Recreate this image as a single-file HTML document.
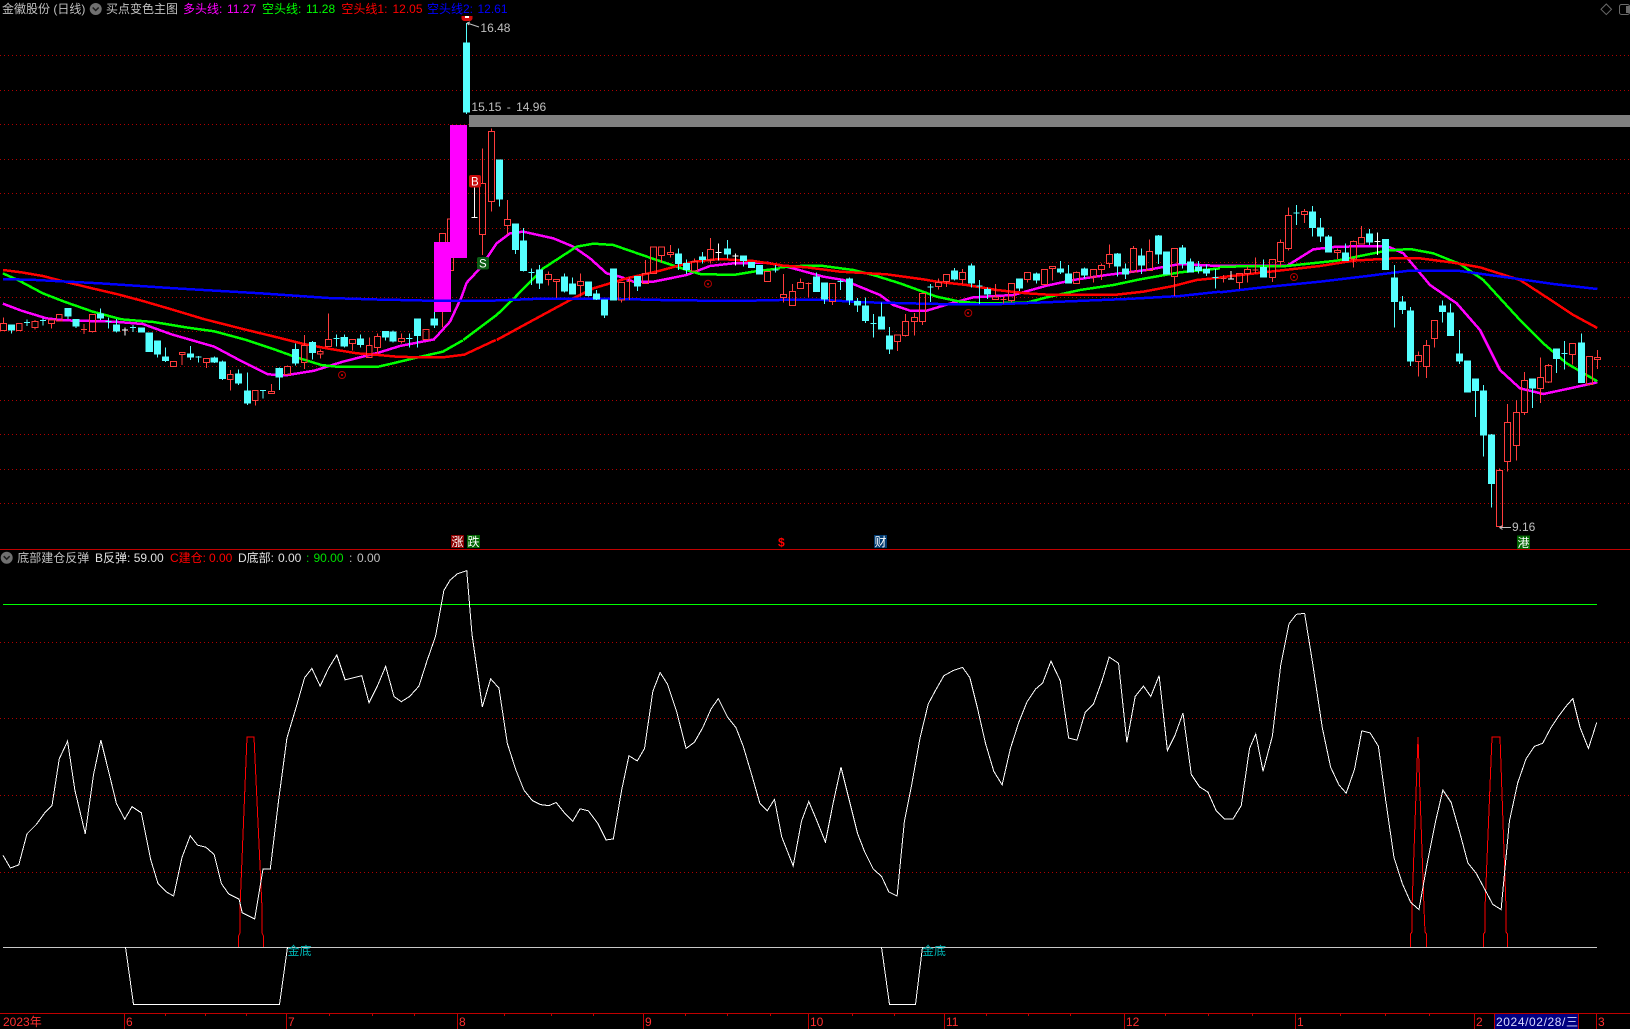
<!DOCTYPE html>
<html lang="zh"><head><meta charset="utf-8"><title>金徽股份</title>
<style>
html,body{margin:0;padding:0;background:#000;width:1630px;height:1029px;overflow:hidden}
svg{display:block;position:absolute;left:0;top:0}
text{font-family:"Liberation Sans","Noto Sans CJK SC",sans-serif;font-size:12px;fill:#c0c0c0}
path,polyline,line,rect.n{vector-effect:non-scaling-stroke}
.c path,.m polyline,.ax,.gr,.il,.il polyline,.il path{shape-rendering:crispEdges}
.cy{fill:#55ffff;stroke:#55ffff;stroke-width:1}
.rd{fill:none;stroke:#ff3c3c;stroke-width:1}
.wh{fill:#fff;stroke:#fff;stroke-width:1}
.m polyline{fill:none;stroke-width:2.5}
</style></head><body>
<svg width="1630" height="1029" viewBox="0 0 1630 1029" xmlns="http://www.w3.org/2000/svg">
<rect width="1630" height="1029" fill="#000"/>
<!-- grid -->
<g class="gr" stroke="#b00000" stroke-width="1" stroke-dasharray="1 3">
<line x1="0" x2="1630" y1="55.5" y2="55.5"/><line x1="0" x2="1630" y1="90.5" y2="90.5"/><line x1="0" x2="1630" y1="124.5" y2="124.5"/><line x1="0" x2="1630" y1="159.5" y2="159.5"/><line x1="0" x2="1630" y1="193.5" y2="193.5"/><line x1="0" x2="1630" y1="228.5" y2="228.5"/><line x1="0" x2="1630" y1="262.5" y2="262.5"/><line x1="0" x2="1630" y1="297.5" y2="297.5"/><line x1="0" x2="1630" y1="331.5" y2="331.5"/><line x1="0" x2="1630" y1="366.5" y2="366.5"/><line x1="0" x2="1630" y1="400.5" y2="400.5"/><line x1="0" x2="1630" y1="434.5" y2="434.5"/><line x1="0" x2="1630" y1="469.5" y2="469.5"/><line x1="0" x2="1630" y1="503.5" y2="503.5"/>
<line x1="0" x2="1630" y1="642.5" y2="642.5"/><line x1="0" x2="1630" y1="718.5" y2="718.5"/><line x1="0" x2="1630" y1="795.5" y2="795.5"/><line x1="0" x2="1630" y1="872.5" y2="872.5"/>
</g>
<!-- gray band -->
<rect x="469" y="115" width="1161" height="12" fill="#808080"/>
<!-- hidden red candles under magenta -->
<g class="c" transform="translate(400 100) scale(.33333)">
<path class="rd" d="M127 400h9V600h-18V400zM127 600V682M151 357h9V512h-18V357z"/>
</g>
<!-- magenta sticks -->
<rect x="434" y="242" width="17" height="70" fill="#ff00ff"/>
<rect x="450" y="125" width="17" height="133" fill="#ff00ff"/>
<!-- moving averages -->
<g class="m" transform="translate(0 240) scale(.35714 .33333)">
<polyline stroke="#ff00ff" points="8,191 60,212 130,235 180,241 320,245 400,252 480,283 600,320 670,360 750,403 800,406 880,392 960,365 1060,338 1120,318 1216,298"/>
<polyline stroke="#00ff00" points="8,100 50,120 120,160 180,185 260,215 340,238 430,246 520,262 600,274 690,300 760,325 830,352 900,375 950,381 1055,381 1100,370 1170,352 1240,335 1296,301"/>
<polyline stroke="#ff0000" points="8,90 60,97 120,108 170,122 250,143 330,163 400,183 480,208 570,237 680,267 780,293 850,312 920,326 1000,340 1060,345 1110,350 1170,352 1240,352 1300,344 1388,300"/>
<polyline stroke="#0000ff" points="8,117 100,120 280,130 490,145 730,160 920,174 1100,180 1120,180"/>
</g>
<g class="m" transform="translate(400 100) scale(.33333)">
<polyline stroke="#ff00ff" points="100,720 150,665 185,590 200,548 240,505 290,430 330,400 370,395 460,415 520,440 570,475 620,520 660,530 700,545 760,545 860,525 930,498 1000,490 1100,488 1140,496"/>
<polyline stroke="#00ff00" points="190,720 290,645 340,597 430,505 530,440 580,431 640,435 770,480 860,510 900,522 1000,525 1060,515 1140,505"/>
<polyline stroke="#ff0000" points="290,720 400,660 520,595 580,565 680,535 780,512 880,485 960,477 1060,483 1140,495"/>
<polyline stroke="#0000ff" points="0,600 130,603 250,603 400,597 660,597 780,600 1000,603 1140,600"/>
</g>
<g class="m" transform="translate(780 190) scale(.33333)">
<polyline stroke="#ff00ff" points="0,225 50,238 130,260 190,270 300,315 340,345 390,362 440,362 520,338 580,322 700,315 800,287 880,270 980,255 1100,240 1200,222 1320,228"/>
<polyline stroke="#00ff00" points="0,232 60,228 130,228 220,240 280,255 360,280 470,320 540,335 600,340 740,338 800,322 900,300 1000,285 1080,268 1200,247 1320,235"/>
<polyline stroke="#ff0000" points="0,226 80,232 180,245 320,253 430,268 470,275 560,285 650,300 740,310 820,315 1000,315 1090,305 1180,288 1250,270 1320,263"/>
<polyline stroke="#0000ff" points="0,330 130,330 260,337 470,342 640,343 770,338 1040,327 1200,318 1320,305"/>
</g>
<g class="m" transform="translate(1220 190) scale(.33333)">
<polyline stroke="#ff00ff" points="0,228 200,228 280,178 350,170 500,168 550,190 630,285 710,340 780,420 840,540 900,595 970,612 1050,595 1132,577"/>
<polyline stroke="#00ff00" points="0,230 200,228 350,212 500,182 570,177 640,190 720,222 790,270 900,390 970,460 1040,520 1132,574"/>
<polyline stroke="#ff0000" points="0,262 150,245 300,228 400,212 520,205 600,205 700,218 780,232 900,270 1000,335 1060,375 1132,414"/>
<polyline stroke="#0000ff" points="0,307 120,293 300,275 450,257 560,243 720,243 860,262 1000,282 1132,297"/>
</g>
<!-- candles section 1 -->
<g class="c" transform="translate(0 240) scale(.35714 .33333)">
<path class="cy" d="M32 255h8.5V270h-17V255zM32 255V281M76 248h8.5h-17M76 238V258M121 242h8.5h-17M121 236V256M191 205h8.5V228h-17V205zM191 228V237M213 238h8.5V258h-17V238zM213 238V264M281 222h8.5V234h-17V222zM281 205V240M304 244h8.5h-17M304 232V266M326 255h8.5V273h-17V255zM326 237V278M373 263h8.5h-17M373 255V276M396 264h8.5V276h-17V264zM418 279h8.5V335h-17V279zM441 303h8.5V342h-17V303zM441 303V352M463 351h8.5V362h-17V351zM463 322V366M533 342h8.5V351h-17V342zM533 318V360M556 351h8.5h-17M556 348V368M600 354h8.5V366h-17V354zM600 349V369M623 366h8.5V416h-17V366zM623 361V420M668 402h8.5V429h-17V402zM668 388V435M693 453h8.5V489h-17V453zM693 397V495M737 452h8.5h-17M737 452V476M782 385h8.5V411h-17V385zM782 382V450M827 328h8.5V369h-17V328zM827 310V376M875 307h8.5V338h-17V307zM875 303V358M942 296h8.5h-17M942 283V320M964 292h8.5V318h-17V292zM964 283V322M1009 297h8.5V313h-17V297zM1009 283V322M1079 274h8.5V291h-17V274zM1079 274V302M1101 276h8.5V303h-17V276zM1101 272V308M1146 296h8.5h-17M1146 281V322M1169 237h8.5V287h-17V237zM1169 237V322M1216 237h8.5V255h-17V237zM1216 216V264"/>
<path class="rd" d="M10 250h8V272h-16V250zM10 232V250M54 250h8V272h-16V250zM98 244h8V263h-16V244zM98 240V244M98 263V268M144 240h8V250h-16V240zM144 250V266M166 223h8V243h-16V223zM235 268h8h-16M235 252V282M259 223h8V275h-16V223zM259 275V277M486 364h8V380h-16V364zM510 337h8V343h-16V337zM510 343V375M578 356h8V368h-16V356zM578 368V384M645 403h8V419h-16V403zM645 390V403M645 419V452M715 451h8V482h-16V451zM715 482V497M760 455h8V460h-16V455zM760 432V455M805 379h8V404h-16V379zM805 376V379M852 316h8V368h-16V316zM852 285V316M852 368V387M897 334h8V342h-16V334zM897 328V334M897 342V356M920 298h8V320h-16V298zM920 220V298M987 298h8V310h-16V298zM987 310V332M1034 316h8V352h-16V316zM1034 292V316M1057 290h8V322h-16V290zM1057 280V290M1057 322V340M1124 295h8V304h-16V295zM1124 280V295M1124 304V310M1193 268h8V299h-16V268z"/>
<path class="wh" d="M350 270h8.5h-17M350 262V287"/>
</g>
<!-- candles section 2 -->
<g class="c" transform="translate(400 100) scale(.33333)">
<path class="cy" d="M199 -171h9V36h-18V-171zM199 -231V42M298 180h9V297h-18V180zM298 180V320M346 372h9V449h-18V372zM346 372V462M370 423h9V511h-18V423zM370 384V515M394 518h9h-18M394 505V555M418 510h9V549h-18V510zM418 495V567M493 531h9V573h-18V531zM493 520V578M517 552h9V582h-18V552zM517 532V552M565 546h9V587h-18V546zM565 546V590M589 582h9V597h-18V582zM589 570V600M613 600h9V645h-18V600zM613 600V654M640 507h9V600h-18V507zM712 529h9V558h-18V529zM712 529V573M835 462h9V490h-18V462zM835 445V510M859 490h9V508h-18V490zM859 478V522M907 471h9V478h-18V471zM907 456V490M982 447h9V462h-18V447zM982 420V475M1030 468h9V482h-18V468zM1030 468V500M1054 487h9V503h-18V487zM1078 497h9V522h-18V497zM1126 510h9h-18M1126 495V518"/>
<path class="rd" d="M247 250h9V404h-18V250zM247 145V250M247 404V465M274 94h9V305h-18V94zM274 85V94M274 305V335M322 358h9V377h-18V358zM322 300V358M322 377V404M445 523h9V539h-18V523zM445 514V523M445 539V556M469 538h9V544h-18V538zM469 544V594M541 544h9V557h-18V544zM541 520V544M541 557V590M664 547h9V600h-18V547zM664 600V608M688 545h9h-18M688 530V600M736 520h9V550h-18V520zM736 480V520M760 441h9V520h-18V441zM784 441h9V467h-18V441zM784 467V487M811 457h9V464h-18V457zM811 435V457M811 464V473M883 485h9V513h-18V485zM883 475V485M931 448h9V480h-18V448zM931 414V448M931 480V490M1102 515h9V545h-18V515z"/>
<path class="wh" d="M223 263V352M214 352h18M955 458h9h-18M955 430V482M1006 468h9h-18M1006 460V497"/>
</g>
<!-- candles section 3 -->
<g class="c" transform="translate(780 190) scale(.33333)">
<path class="cy" d="M109 261h9V305h-18V261zM109 247V261M133 279h9V327h-18V279zM133 279V342M181 275h9h-18M181 268V300M208 267h9V330h-18V267zM208 262V345M232 335h9V345h-18V335zM232 324V366M256 348h9V392h-18V348zM256 322V399M280 400h9h-18M280 372V443M304 381h9V417h-18V381zM304 338V381M328 438h9V477h-18V438zM328 411V492M451 291h9h-18M451 282V336M523 243h9V267h-18V243zM523 234V272M574 228h9V279h-18V228zM574 220V293M598 288h9h-18M598 270V342M622 298h9V312h-18V298zM622 292V327M718 267h9V294h-18V267zM718 267V303M769 252h9V270h-18V252zM769 247V280M841 237h9V246h-18V237zM841 213V252M865 252h9V279h-18V252zM865 225V252M913 237h9V255h-18V237zM913 232V265M1012 192h9V228h-18V192zM1012 189V260M1036 237h9V252h-18V237zM1036 220V267M1084 198h9V225h-18V198zM1084 175V252M1135 138h9V192h-18V138zM1135 135V222M1159 186h9V252h-18V186zM1207 174h9V220h-18V174zM1207 165V235M1231 216h9V246h-18V216zM1231 205V216M1255 231h9V242h-18V231zM1255 213V250M1279 238h9V249h-18V238zM1279 224V258M1306 262h9h-18M1306 237V295"/>
<path class="rd" d="M10 313h9V322h-18V313zM10 252V313M10 322V338M37 304h9V347h-18V304zM37 282V304M61 277h9V295h-18V277zM61 265V277M85 281h9h-18M85 277V322M157 280h9V335h-18V280zM157 335V345M352 435h9V455h-18V435zM352 455V483M376 394h9V437h-18V394zM376 372V394M376 437V440M403 382h9V395h-18V382zM403 369V382M403 395V437M427 310h9V395h-18V310zM427 395V405M475 277h9V290h-18V277zM475 265V277M475 290V299M499 253h9V275h-18V253zM499 275V291M547 247h9V269h-18V247zM547 237V247M547 269V282M646 321h9V329h-18V321zM646 282V321M670 329h9h-18M670 320V340M694 280h9V332h-18V280zM694 332V338M742 247h9V269h-18V247zM742 269V278M793 238h9V284h-18V238zM817 229h9V236h-18V229zM817 236V272M889 247h9V281h-18V247zM889 244V247M940 238h9V261h-18V238zM940 261V278M964 226h9V239h-18V226zM964 220V226M964 239V270M988 193h9V221h-18V193zM988 163V193M988 221V234M1060 175h9V246h-18V175zM1060 168V175M1108 184h9V242h-18V184zM1108 148V184M1183 175h9V260h-18V175zM1183 260V318"/>
</g>
<!-- candles section 4 -->
<g class="c" transform="translate(1220 190) scale(.33333)">
<path class="cy" d="M130 232h9V261h-18V232zM130 208V232M229 69h9h-18M229 45V105M277 66h9V113h-18V66zM277 48V140M301 114h9V138h-18V114zM301 84V156M325 141h9V186h-18V141zM325 135V141M376 189h9V212h-18V189zM376 160V189M448 132h9V156h-18V132zM448 117V165M496 148h9V239h-18V148zM523 264h9V335h-18V264zM523 225V413M547 336h9V359h-18V336zM547 318V372M571 363h9V513h-18V363zM571 351V528M667 348h9V365h-18V348zM667 331V398M691 369h9V437h-18V369zM691 340V369M718 492h9V513h-18V492zM718 420V522M742 513h9V606h-18V513zM742 513V608M766 567h9V602h-18V567zM766 567V681M790 603h9V735h-18V603zM790 585V800M814 735h9V881h-18V735zM814 732V953M937 567h9V594h-18V567zM937 567V654M1009 477h9V506h-18V477zM1009 477V549M1033 490h9h-18M1033 453V539M1084 459h9V578h-18V459zM1084 430V459"/>
<path class="rd" d="M10 265h9h-18M10 255V278M58 250h9V278h-18V250zM58 278V297M82 238h9V250h-18V238zM82 230V238M82 250V278M106 240h9h-18M106 202V250M157 208h9V263h-18V208zM157 263V276M181 157h9V215h-18V157zM181 148V157M181 215V230M205 76h9V176h-18V76zM205 52V76M205 176V182M253 64h9V74h-18V64zM253 57V64M253 74V99M352 181h9V188h-18V181zM352 175V181M352 188V207M400 154h9V207h-18V154zM400 151V154M400 207V233M424 142h9V162h-18V142zM424 108V142M595 496h9V515h-18V496zM595 484V496M595 515V560M619 466h9V529h-18V466zM619 450V466M619 529V564M643 391h9V445h-18V391zM643 445V473M838 841h9V1010h-18V841zM838 835V841M862 697h9V814h-18V697zM862 642V697M862 814V845M889 667h9V767h-18V667zM889 630V667M889 767V812M913 571h9V668h-18V571zM913 546V571M913 668V675M961 562h9V596h-18V562zM961 502V562M961 596V639M985 526h9V576h-18V526zM985 522V526M985 576V579M1057 460h9V494h-18V460zM1057 494V523M1108 499h9V583h-18V499zM1132 502h9V508h-18V502zM1132 480V502M1132 508V537"/>
<path class="wh" d="M33 267h9h-18M33 243V268M472 154h9h-18M472 127V195"/>
</g>
<!-- red circle markers -->
<g fill="none" stroke="#b00000" stroke-width="1">
<circle cx="342" cy="375" r="3.5"/><circle cx="708" cy="283.7" r="3.5"/><circle cx="968.3" cy="313" r="3.5"/><circle cx="1294" cy="277" r="3.5"/>
</g>
<g fill="#b00000"><rect x="341" y="374" width="2" height="2"/><rect x="707" y="283" width="2" height="2"/><rect x="967" y="312" width="2" height="2"/><rect x="1293" y="276" width="2" height="2"/></g>
<!-- badges -->
<rect x="469" y="175" width="12" height="12.5" rx="2" fill="#c80a0a"/><text x="471" y="185.5" style="fill:#fff;font-size:11.5px">B</text>
<rect x="477" y="257" width="12" height="12.5" rx="2" fill="#0a5c14"/><text x="479" y="267.5" style="fill:#fff;font-size:11.5px">S</text>
<!-- top clipped badge -->
<path d="M461.5 16H472.5V18C472.5 20 471 21 469 21H465C463 21 461.5 20 461.5 18Z" fill="#d20a0a"/><rect x="465" y="16" width="4" height="2" fill="#fff"/>
<!-- price annotations -->
<path d="M467 23L479 27M467 23l3 -1M467 23l2 2" stroke="#c0c0c0" fill="none"/>
<text x="480.4" y="32">16.48</text>
<text x="471.4" y="111" style="word-spacing:2px">15.15 - 14.96</text>
<path d="M1499.5 527.5H1511M1499.5 527.5l3 -2M1499.5 527.5l3 2" stroke="#c0c0c0" fill="none"/>
<text x="1512" y="531">9.16</text>
<!-- title row -->
<text x="2" y="13">金徽股份 (日线)</text>
<circle cx="95.7" cy="9" r="6" fill="#707070"/><path d="M92.7 7.5l3 3 3-3" stroke="#1c1c1c" stroke-width="1.5" fill="none"/>
<text x="106" y="13">买点变色主图</text>
<text x="183" y="13" style="fill:#ff00ff">多头线:</text><text x="227" y="13" style="fill:#ff00ff">11.27</text>
<text x="262" y="13" style="fill:#00ff00">空头线:</text><text x="306" y="13" style="fill:#00ff00">11.28</text>
<text x="341.4" y="13" style="fill:#ff0000">空头线1:</text><text x="392.5" y="13" style="fill:#ff0000">12.05</text>
<text x="427" y="13" style="fill:#0000ff">空头线2:</text><text x="477.5" y="13" style="fill:#0000ff">12.61</text>
<!-- top-right icons -->
<path d="M1606.3 4L1611.5 9.3L1606.3 14.6L1601 9.3Z" fill="none" stroke="#6a6a6a"/>
<rect x="1619.5" y="4.5" width="10" height="10" rx="2" fill="none" stroke="#6a6a6a"/><rect x="1626" y="6" width="3" height="7" fill="#6a6a6a"/>
<!-- tags -->
<rect x="451" y="535" width="13" height="13" fill="#8b0000"/><text x="451.5" y="546" style="fill:#fff">涨</text>
<rect x="467" y="535" width="13" height="13" fill="#006400"/><text x="467.5" y="546" style="fill:#fff">跌</text>
<text x="778" y="546.5" style="fill:#ff0000;font-weight:bold">$</text>
<rect x="874" y="535" width="13" height="13" fill="#003a70"/><text x="874.5" y="546" style="fill:#fff">财</text>
<rect x="1517" y="535.5" width="13" height="13.5" fill="#006400"/><text x="1517.5" y="547" style="fill:#fff">港</text>
<!-- separator -->
<rect class="ax" x="0" y="549" width="1630" height="1" fill="#c00000"/>
<!-- lower panel labels -->
<circle cx="6.7" cy="557.7" r="6" fill="#707070"/><path d="M3.7 556.2l3 3 3-3" stroke="#1c1c1c" stroke-width="1.5" fill="none"/>
<text x="17.3" y="562">底部建仓反弹</text>
<text x="95" y="562" style="fill:#e0e0e0">B反弹:</text><text x="133.7" y="562" style="fill:#e0e0e0">59.00</text>
<text x="170" y="562" style="fill:#ff0000">C建仓:</text><text x="209" y="562" style="fill:#ff0000">0.00</text>
<text x="238" y="562" style="fill:#e0e0e0">D底部:</text><text x="278" y="562" style="fill:#e0e0e0">0.00</text>
<text x="306" y="562" style="fill:#00e000">:</text><text x="313.5" y="562" style="fill:#00e000">90.00</text>
<text x="349" y="562">:</text><text x="357" y="562">0.00</text>
<!-- reference lines -->
<rect class="ax" x="3" y="604" width="1594" height="1" fill="#00ff00"/>
<rect class="ax" x="3" y="947" width="1594" height="1" fill="#c8c8c8"/>
<!-- red spikes -->
<g fill="none" stroke="#ff0000" stroke-width="1" class="il">
<polyline points="238.5,947 238.5,936 240,933 240,908 247,737 254,737 262,908 262,933 263.5,936 263.5,947"/>
<polyline points="1410.5,947 1410.5,934 1412,932 1412,908 1418,737 1424,908 1425,932 1426.5,934 1426.5,947"/>
<polyline points="1483.5,947 1483.5,934 1485,932 1485,908 1492,737 1500,737 1506,908 1506,932 1507.5,934 1507.5,947"/>
</g>
<!-- white indicator -->
<g class="il" transform="scale(1.03954)" fill="none" stroke="#ffffff" stroke-width="1">
<polyline points="3,823 10,835 18,832 26,802 35,793 43,782 50,775 57,730 65,713 72,760 82,802 90,745 97,712 104,740 112,773 120,788 127,776 136,782 145,827 152,850 160,858 167,862 175,825 183,804 190,813 198,815 206,822 213,850 220,860 230,865 233,878 245,884 253,836 260,836 268,770 276,710 285,680 293,652 300,643 308,660 316,643 324,630 332,654 340,652 348,650 355,676 363,660 371,641 379,670 386,675 394,670 403,660 411,635 419,612 427,568 433,558 440,552 449,549 454,610 464,680 472,653 480,662 488,715 496,740 504,760 512,770 520,774 528,775 535,772 543,782 551,790 558,778 566,780 575,792 583,808 590,807 598,760 605,727 613,732 620,720 628,665 635,647 642,658 651,685 660,720 668,714 676,700 684,682 691,672 700,690 708,700 715,718 723,745 731,773 738,780 745,769 752,805 763,833 771,790 778,771 786,790 794,810 802,770 809,738 817,770 825,802 832,820 840,836 848,843 855,858 863,862 870,790 877,755 885,710 893,677 900,664 908,650 917,645 926,642 933,652 940,680 948,715 956,742 964,755 972,720 980,695 988,675 996,663 1003,657 1011,636 1020,655 1028,710 1036,712 1044,685 1052,677 1060,655 1067,632 1076,638 1084,714 1092,670 1100,660 1107,670 1115,650 1123,722 1130,708 1138,686 1146,745 1154,757 1162,762 1170,780 1178,788 1186,788 1194,775 1202,720 1208,706 1215,742 1224,708 1232,640 1240,600 1247,591 1255,590 1263,640 1272,700 1280,738 1288,755 1295,763 1303,740 1310,703 1318,705 1326,718 1333,770 1341,825 1349,850 1357,868 1365,875 1373,830 1381,790 1388,760 1396,772 1404,800 1412,830 1420,840 1428,855 1436,870 1444,875 1452,790 1460,753 1468,730 1476,718 1484,715 1492,700 1500,688 1506,680 1513,672 1520,700 1528,720 1536,695"/>
</g>
<g class="il" fill="none" stroke="#ffffff">
<path d="M125.5 947L133.5 1004.5H279.5L287.5 947"/>
<path d="M881.5 947L889.5 1004.5H915.5L922.5 947"/>
</g>
<text x="287.5" y="955" style="fill:#00b4b4">金底</text>
<text x="922" y="955" style="fill:#00b4b4">金底</text>
<!-- x axis -->
<rect class="ax" x="0" y="1013" width="1630" height="1" fill="#c00000"/>
<g class="ax" stroke="#c00000" stroke-width="1">
<path d="M124.5 1013V1029M286.5 1013V1029M457.5 1013V1029M643.5 1013V1029M808.5 1013V1029M944.5 1013V1029M1124.5 1013V1029M1295.5 1013V1029M1474.5 1013V1029M1494.5 1013V1029M1578.5 1013V1029M1596.5 1013V1029"/>
<path d="M165.5 1013V1016M205.5 1013V1016M246.5 1013V1016M329.5 1013V1016M372.5 1013V1016M414.5 1013V1016M504.5 1013V1016M551.5 1013V1016M593.5 1013V1016M685.5 1013V1016M727.5 1013V1016M770.5 1013V1016M852.5 1013V1016M894.5 1013V1016M986.5 1013V1016M1028.5 1013V1016M1070.5 1013V1016M1165.5 1013V1016M1208.5 1013V1016M1252.5 1013V1016M1340.5 1013V1016M1385.5 1013V1016M1429.5 1013V1016"/>
</g>
<g style="fill:#ff3030">
<text x="3" y="1026" style="fill:#ff3030">2023年</text>
<text x="126" y="1026" style="fill:#ff3030">6</text><text x="288" y="1026" style="fill:#ff3030">7</text><text x="459" y="1026" style="fill:#ff3030">8</text><text x="645" y="1026" style="fill:#ff3030">9</text><text x="810" y="1026" style="fill:#ff3030">10</text><text x="946" y="1026" style="fill:#ff3030">11</text><text x="1126" y="1026" style="fill:#ff3030">12</text><text x="1297" y="1026" style="fill:#ff3030">1</text><text x="1476" y="1026" style="fill:#ff3030">2</text><text x="1598" y="1026" style="fill:#ff3030">3</text>
</g>
<rect x="1495" y="1014" width="83" height="15" fill="#000080"/>
<text x="1496" y="1026" style="fill:#d8d8ff;letter-spacing:.6px">2024/02/28/三</text>
</svg>
</body></html>
